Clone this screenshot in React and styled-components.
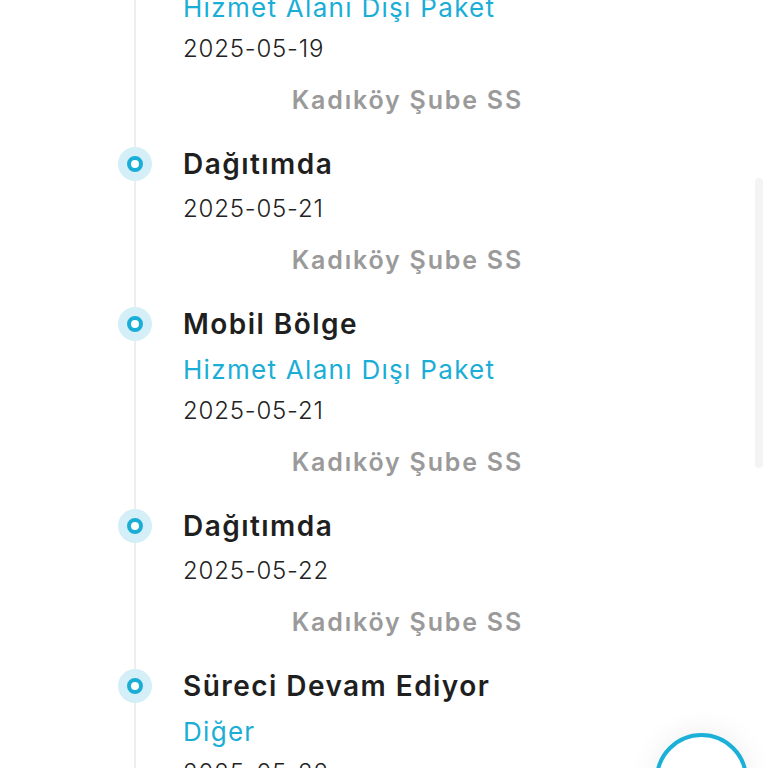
import React from "react";
import styled, { createGlobalStyle } from "styled-components";
import { ArrowUp } from "lucide-react";

const events = [
  { title: "Mobil Bölge", note: "Hizmet Alanı Dışı Paket", date: "2025-05-19", place: "Kadıköy Şube SS" },
  { title: "Dağıtımda", date: "2025-05-21", place: "Kadıköy Şube SS" },
  { title: "Mobil Bölge", note: "Hizmet Alanı Dışı Paket", date: "2025-05-21", place: "Kadıköy Şube SS" },
  { title: "Dağıtımda", date: "2025-05-22", place: "Kadıköy Şube SS" },
  { title: "Süreci Devam Ediyor", note: "Diğer", date: "2025-05-22", place: "Kadıköy Şube SS" },
];

const App = () => {
  return (
    <>
      <GlobalStyle />
      <Page>
        <Timeline>
          {events.map((ev, i) => (
            <Item key={i}>
              <Dot />
              <Body>
                <Title>{ev.title}</Title>
                {ev.note && <Note>{ev.note}</Note>}
                <DateLine>{ev.date}</DateLine>
                <Place>{ev.place}</Place>
              </Body>
            </Item>
          ))}
        </Timeline>
        <ScrollThumb />
        <TopButton>
          <ArrowUp size={30} strokeWidth={2} />
        </TopButton>
      </Page>
    </>
  );
};

const GlobalStyle = createGlobalStyle`
  html, body {
    margin: 0;
    padding: 0;
    background: #ffffff;
  }
  body {
    font-family: Inter, "Noto Sans", sans-serif;
    overflow: hidden;
  }
`;

const Page = styled.div`
  position: relative;
  width: 768px;
  height: 768px;
  overflow: hidden;
  background: #ffffff;
`;

const Timeline = styled.div`
  position: relative;
  margin-top: -63px;
  padding-left: 118px;
  &::before {
    content: "";
    position: absolute;
    left: 134px;
    top: 0;
    bottom: 0;
    width: 2px;
    background: #eeeeee;
  }
`;

const Item = styled.div`
  display: grid;
  grid-template-columns: 34px 340px;
  column-gap: 31px;
  padding-bottom: 19px;
`;

const Dot = styled.span`
  position: relative;
  box-sizing: border-box;
  width: 34px;
  height: 34px;
  margin-top: 8px;
  border-radius: 50%;
  background: #d4eff8;
  display: flex;
  align-items: center;
  justify-content: center;
  &::after {
    content: "";
    box-sizing: border-box;
    width: 16px;
    height: 16px;
    border-radius: 50%;
    border: 4px solid #1aaed7;
    background: #ffffff;
  }
`;

const Body = styled.div`
  display: flex;
  flex-direction: column;
`;

const Title = styled.div`
  font-size: 28px;
  font-weight: 600;
  line-height: 50px;
  letter-spacing: 1.45px;
  color: #1f1f1f;
`;

const Note = styled.div`
  font-size: 26px;
  font-weight: 400;
  line-height: 42px;
  letter-spacing: 1.3px;
  color: #1aaed7;
`;

const DateLine = styled.div`
  font-size: 24px;
  font-weight: 300;
  line-height: 40px;
  letter-spacing: 0.8px;
  color: #222222;
`;

const Place = styled.div`
  margin-top: 11px;
  font-size: 25px;
  font-weight: 600;
  line-height: 40px;
  letter-spacing: 1.8px;
  color: #9a9a9a;
  text-align: right;
`;

const ScrollThumb = styled.div`
  position: absolute;
  right: 5px;
  top: 178px;
  width: 8px;
  height: 290px;
  border-radius: 4px;
  background: #f4f4f4;
`;

const TopButton = styled.div`
  position: absolute;
  left: 655px;
  top: 733px;
  box-sizing: border-box;
  width: 93px;
  height: 93px;
  border-radius: 50%;
  border: 4px solid #1ab0d8;
  background: #ffffff;
  box-shadow: 0 0 30px rgba(0, 0, 0, 0.08);
  display: flex;
  align-items: center;
  justify-content: center;
  color: #9a9a9a;
`;

export default App;
